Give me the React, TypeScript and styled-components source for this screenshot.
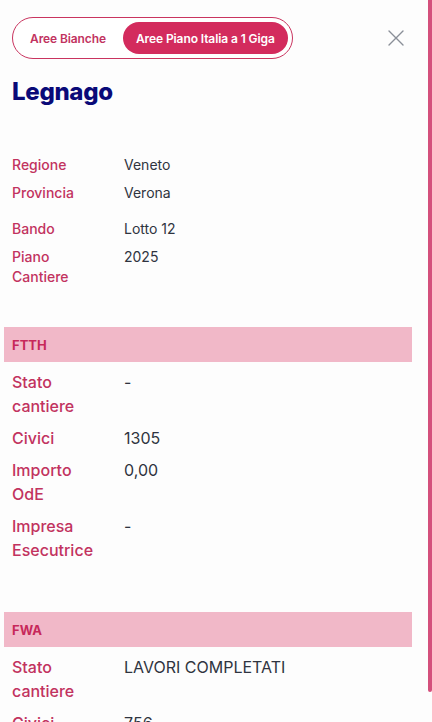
import React, { useState } from 'react'
import styled, { createGlobalStyle } from 'styled-components'

const GlobalStyle = createGlobalStyle`
  html, body {
    margin: 0;
    padding: 0;
    background: #fdfdfd;
    font-family: Inter, "Noto Sans", Arial, sans-serif;
  }
  * { box-sizing: border-box; }
`

interface Field {
  label: string
  value: string
}

interface Section {
  title: string
  fields: Field[]
}

const infoGroups: Field[][] = [
  [
    { label: 'Regione', value: 'Veneto' },
    { label: 'Provincia', value: 'Verona' },
  ],
  [
    { label: 'Bando', value: 'Lotto 12' },
    { label: 'Piano Cantiere', value: '2025' },
  ],
]

const sections: Section[] = [
  {
    title: 'FTTH',
    fields: [
      { label: 'Stato cantiere', value: '-' },
      { label: 'Civici', value: '1305' },
      { label: 'Importo OdE', value: '0,00' },
      { label: 'Impresa Esecutrice', value: '-' },
    ],
  },
  {
    title: 'FWA',
    fields: [
      { label: 'Stato cantiere', value: 'LAVORI COMPLETATI' },
      { label: 'Civici', value: '756' },
      { label: 'Importo OdE', value: '0,00' },
      { label: 'Impresa Esecutrice', value: '-' },
    ],
  },
]

const tabs = ['Aree Bianche', 'Aree Piano Italia a 1 Giga']

const App = () => {
  // tab attivo
  const [activeTab, setActiveTab] = useState(1)

  return (
    <>
      <GlobalStyle />
      <Frame>
        <Panel>
          <TopBar>
            <Toggle>
              {tabs.map((tab, index) => (
                <TabButton key={tab} active={index === activeTab} onClick={() => setActiveTab(index)}>
                  {tab}
                </TabButton>
              ))}
            </Toggle>
            <CloseButton aria-label="Chiudi">
              <svg width="16" height="16" viewBox="0 0 16 16" fill="none">
                <path d="M1 1L15 15M15 1L1 15" stroke="#8a8f98" strokeWidth="1.4" strokeLinecap="round" />
              </svg>
            </CloseButton>
          </TopBar>
          <Title>Legnago</Title>
          <InfoBlock>
            {infoGroups.map((group, gi) => (
              <InfoGroup key={gi}>
                {group.map((field) => (
                  <InfoRow key={field.label}>
                    <InfoLabel>{field.label}</InfoLabel>
                    <InfoValue>{field.value}</InfoValue>
                  </InfoRow>
                ))}
              </InfoGroup>
            ))}
          </InfoBlock>
          {sections.map((section) => (
            <SectionBox key={section.title}>
              <SectionHeader>{section.title}</SectionHeader>
              <SectionBody>
                {section.fields.map((field) => (
                  <DataRow key={field.label}>
                    <DataLabel>{field.label}</DataLabel>
                    <DataValue>{field.value}</DataValue>
                  </DataRow>
                ))}
              </SectionBody>
            </SectionBox>
          ))}
        </Panel>
        <ScrollTrack>
          <ScrollThumb />
        </ScrollTrack>
      </Frame>
    </>
  )
}

const Frame = styled.div`
  display: flex;
  width: 432px;
  height: 722px;
  overflow: hidden;
  background: #fdfdfd;
`
const Panel = styled.div`
  flex: 1;
  padding: 17px 16px 0 4px;
  overflow: hidden;
`
const TopBar = styled.div`
  display: flex;
  align-items: center;
  justify-content: space-between;
  padding-left: 8px;
`
const Toggle = styled.div`
  display: flex;
  align-items: center;
  gap: 4px;
  height: 42px;
  padding: 4px;
  border: 1px solid #c9345f;
  border-radius: 21px;
  background: #ffffff;
`
interface TabProp {
  active?: boolean
}
const TabButton = styled.button<TabProp>`
  height: 32px;
  padding: 0 13px;
  border: none;
  border-radius: 16px;
  font-family: inherit;
  font-size: 12px;
  font-weight: 600;
  letter-spacing: -0.1px;
  color: ${(props) => (props.active ? '#ffffff' : '#c2335f')};
  background: ${(props) => (props.active ? '#d32b5d' : 'transparent')};
  cursor: pointer;
`
const CloseButton = styled.button`
  display: flex;
  align-items: center;
  justify-content: center;
  width: 24px;
  height: 24px;
  margin-right: 4px;
  padding: 0;
  border: none;
  background: transparent;
  cursor: pointer;
`
const Title = styled.h1`
  margin: 18px 0 0 8px;
  font-size: 24px;
  line-height: 30px;
  font-weight: 800;
  color: #0a0a78;
  letter-spacing: -0.3px;
`
const InfoBlock = styled.div`
  display: flex;
  flex-direction: column;
  gap: 16px;
  margin: 48px 0 0 8px;
`
const InfoGroup = styled.div`
  display: flex;
  flex-direction: column;
  gap: 8px;
`
const InfoRow = styled.div`
  display: grid;
  grid-template-columns: 112px 1fr;
  font-size: 14px;
  line-height: 20px;
`
const InfoLabel = styled.div`
  width: 80px;
  color: #c2335f;
  font-weight: 500;
`
const InfoValue = styled.div`
  color: #2f3440;
`
const SectionBox = styled.section`
  margin-top: 50px;
  &:first-of-type {
    margin-top: 40px;
  }
`
const SectionHeader = styled.div`
  height: 35px;
  padding: 0 8px;
  display: flex;
  align-items: center;
  background: #f1b8c8;
  color: #c7285a;
  font-size: 13px;
  font-weight: 700;
`
const SectionBody = styled.div`
  display: flex;
  flex-direction: column;
  gap: 8px;
  padding: 8px 8px 0 8px;
`
const DataRow = styled.div`
  display: grid;
  grid-template-columns: 112px 1fr;
  font-size: 16px;
  line-height: 24px;
`
const DataLabel = styled.div`
  width: 90px;
  color: #c2335f;
  font-weight: 500;
`
const DataValue = styled.div`
  color: #2f3440;
`
const ScrollTrack = styled.div`
  width: 4px;
  height: 100%;
`
const ScrollThumb = styled.div`
  width: 4px;
  height: 692px;
  background: #d4507c;
  border-radius: 0 0 3px 3px;
`

export default App
